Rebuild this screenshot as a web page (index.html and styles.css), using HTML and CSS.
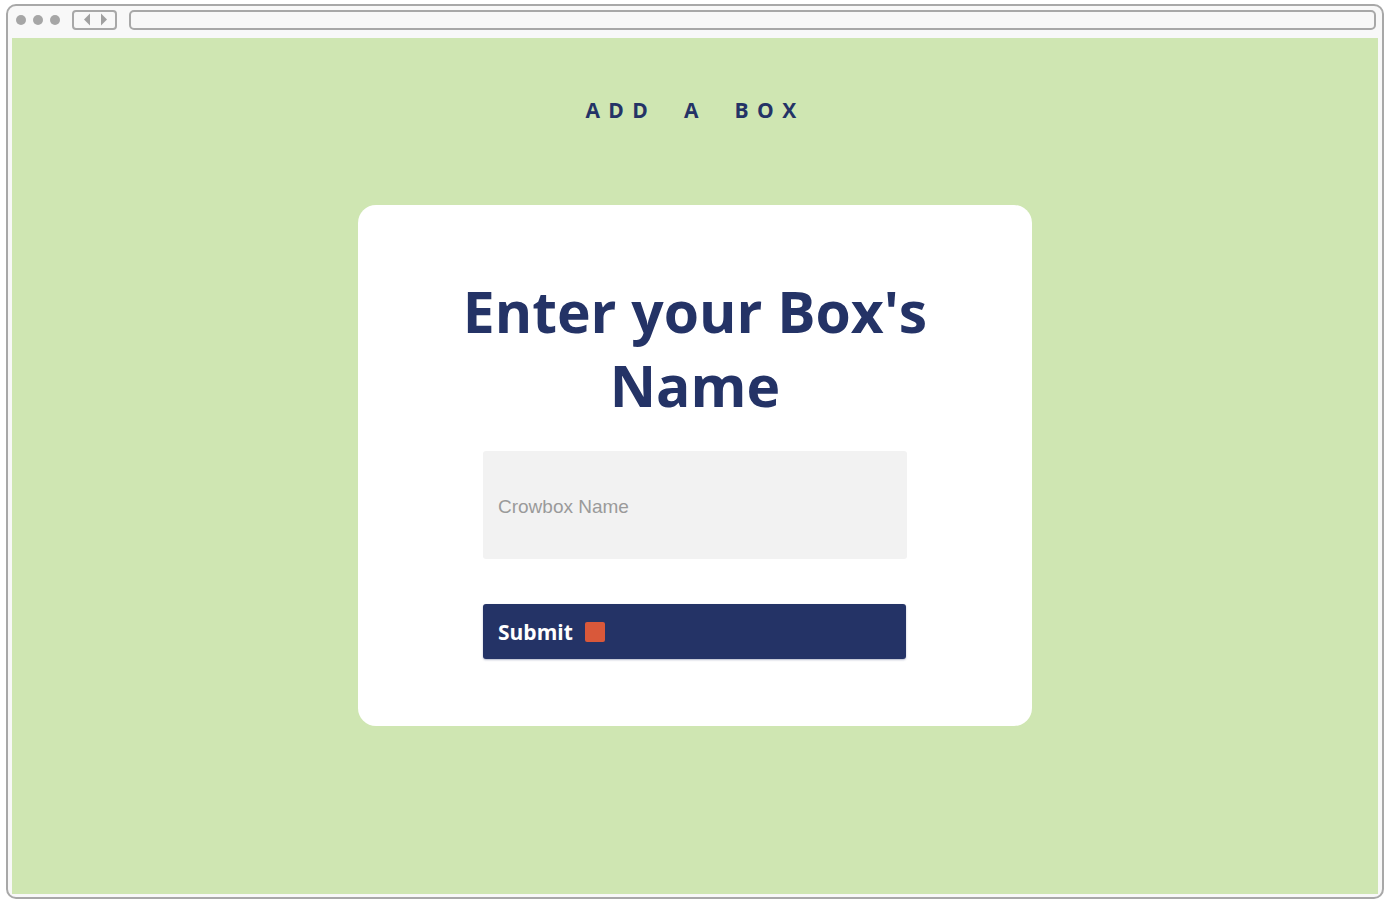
FILE: index.html
```html
<!DOCTYPE html>
<html lang="en">
<head>
<meta charset="utf-8">
<title>Add a Box</title>
<link rel="stylesheet" href="styles.css">
</head>
<body>
<div class="window">
  <div class="topbar">
    <div class="dots"><span></span><span></span><span></span></div>
    <div class="nav">
      <svg width="40" height="15" viewBox="0 0 40 15"><path d="M15 1.5 L9 7.5 L15 13.5 Z" fill="#a0a0a0"/><path d="M26 1.5 L32 7.5 L26 13.5 Z" fill="#a0a0a0"/></svg>
    </div>
    <div class="address"></div>
  </div>
  <div class="content">
    <h1 class="page-title">ADD&nbsp; A&nbsp; BOX</h1>
    <div class="card">
      <h2 class="card-title">Enter your Box's Name</h2>
      <form class="form">
        <input class="name-input" type="text" placeholder="Crowbox Name">
        <button class="submit" type="button">Submit <span class="square"></span></button>
      </form>
    </div>
  </div>
</div>
</body>
</html>
```

FILE: styles.css
```css
html, body {
  margin: 0;
  padding: 0;
  background: #ffffff;
}
.window {
  margin: 4px 6px 6px 6px;
  height: 895px;
  box-sizing: border-box;
  border: 2px solid #a8a8a8;
  border-radius: 10px;
  background: #f8f8f8;
  padding: 0 4px 3px 4px;
  display: flex;
  flex-direction: column;
}
.topbar {
  height: 32px;
  flex: none;
  display: flex;
  align-items: center;
}
.dots {
  display: flex;
  gap: 7px;
  margin-left: 4px;
  margin-top: -5px;
}
.dots span {
  width: 10px;
  height: 10px;
  border-radius: 50%;
  background: #a6a6a6;
}
.nav {
  margin-left: 12px;
  width: 41px;
  height: 16px;
  border: 2px solid #a8a8a8;
  border-radius: 4px;
  margin-top: -5px;
  display: flex;
  align-items: center;
  justify-content: center;
}
.nav svg { display: block; }
.address {
  margin-left: 12px;
  flex: 1;
  margin-right: 2px;
  height: 16px;
  border: 2px solid #a8a8a8;
  border-radius: 5px;
  margin-top: -5px;
}
.content {
  flex: 1;
  background: #cfe6b2;
  display: flex;
  flex-direction: column;
  align-items: center;
}
.page-title {
  margin: 57px 0 0;
  font-family: "Open Sans", sans-serif;
  font-weight: 700;
  font-size: 21px;
  letter-spacing: 8.4px;
  color: #243366;
  line-height: 30px;
  padding-left: 0;
}
.card {
  margin-top: 80px;
  width: 674px;
  height: 521px;
  box-sizing: border-box;
  background: #ffffff;
  border-radius: 18px;
  padding: 69px 125px 0;
}
.card-title {
  margin: 0 -40px;
  text-align: center;
  font-family: "Open Sans", sans-serif;
  font-weight: 700;
  font-size: 57px;
  line-height: 74px;
  color: #243366;
  letter-spacing: 0;
}
.form {
  margin-top: 29px;
  display: flex;
  flex-direction: column;
  gap: 45px;
}
.name-input {
  height: 108px;
  box-sizing: border-box;
  border: none;
  border-radius: 3px;
  background: #f2f2f2;
  padding: 3px 15px 0;
  font-family: "Liberation Sans", Arial, sans-serif;
  font-size: 19px;
  color: #333;
  outline: none;
}
.name-input::placeholder { color: #9a9a9a; }
.submit {
  width: 423px;
  height: 55px;
  border: none;
  border-radius: 3px;
  background: #243366;
  color: #ffffff;
  font-family: "Open Sans", sans-serif;
  font-weight: 700;
  font-size: 21px;
  text-align: left;
  padding: 0 15px;
  display: flex;
  align-items: center;
  gap: 12px;
  box-shadow: 0 1px 2px rgba(36,51,102,0.35);
}
.square {
  width: 20px;
  height: 20px;
  border-radius: 2px;
  background: #d9583a;
}
```
